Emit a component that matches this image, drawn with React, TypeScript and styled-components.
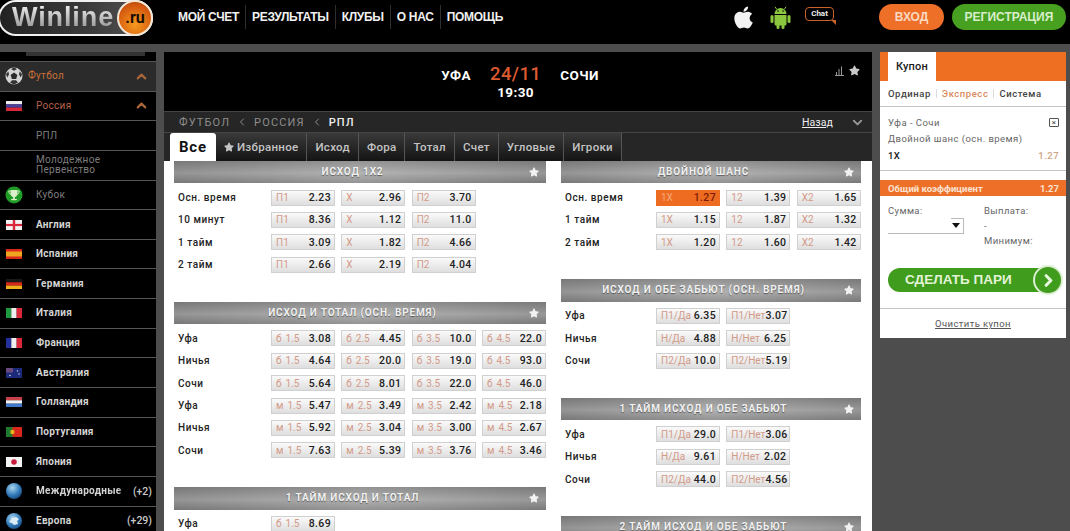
import React from "react";
import styled, { createGlobalStyle } from "styled-components";
import { FaApple, FaStar } from "react-icons/fa";
import { FiChevronDown, FiChevronLeft, FiChevronUp, FiChevronRight } from "react-icons/fi";

const GlobalStyle = createGlobalStyle`
  html, body {
    margin: 0;
    height: 100%;
    overflow: hidden;
    background: #4d4d4d;
    font-family: Roboto, "Liberation Sans", sans-serif;
  }
  * { box-sizing: border-box; }
`;

const Shell = styled.div`
  height: 531px;
  overflow: hidden;
  display: flex;
  flex-direction: column;
`;

const Top = styled.header`
  height: 44px;
  flex: none;
  background: #000;
  display: flex;
  align-items: center;
  padding-right: 4px;
`;

const Logo = styled.div`
  width: 155px;
  height: 36px;
  margin-top: -9px;
  margin-left: -2px;
  padding-left: 12px;
  border: 2px solid #f1f1f1;
  border-radius: 18px;
  background: linear-gradient(90deg, #222, #3c3c3c 60%, #555);
  display: flex;
  align-items: center;
  position: relative;
  flex: none;
`;

const LogoText = styled.span`
  font-family: "Liberation Sans", sans-serif;
  font-size: 27px;
  font-weight: 700;
  letter-spacing: 0.9px;
  line-height: 1;
  background: linear-gradient(180deg, #f2f2f2, #8d8d8d);
  -webkit-background-clip: text;
  background-clip: text;
  color: transparent;
`;

const LogoBadge = styled.span`
  position: absolute;
  right: -2px;
  top: -2px;
  width: 36px;
  height: 36px;
  border-radius: 50%;
  border: 2px solid #f3e6d4;
  background: radial-gradient(circle at 50% 70%, #f79a1e, #d3570f 70%, #8f3a0a);
  color: #1a0d02;
  font-size: 16px;
  font-weight: 700;
  display: flex;
  align-items: center;
  justify-content: center;
`;

const Nav = styled.nav`
  display: flex;
  align-items: center;
  margin-left: 25px;
  margin-top: -11px;
`;

const NavItem = styled.a`
  font-family: "Liberation Sans", sans-serif;
  font-size: 12px;
  font-weight: 700;
  letter-spacing: -0.3px;
  color: #f0f0f0;
  height: 24px;
  line-height: 24px;
  padding: 0 6px;
  white-space: nowrap;
  border-left: 1px solid #2e2e2e;

  &:first-child {
    border-left: 0;
    padding-left: 0;
  }
`;

const TopRight = styled.div`
  margin-left: auto;
  display: flex;
  align-items: center;
  margin-top: -10px;
`;

const AppIcons = styled.div`
  display: flex;
  align-items: center;
  gap: 14px;
  margin-right: 45px;
`;

const ChatBubble = styled.span`
  position: relative;
  width: 29px;
  height: 14px;
  margin-top: -6px;
  border: 1.5px solid #c9622a;
  border-radius: 4px;
  color: #eee;
  font-size: 8px;
  font-weight: 700;
  text-align: center;
  line-height: 11px;

  &::after {
    content: "";
    position: absolute;
    right: -3px;
    bottom: -5px;
    border-top: 5px solid #c9622a;
    border-left: 5px solid transparent;
  }
`;

const PillButton = styled.a<{ $green?: boolean; $width: number }>`
  width: ${(p) => p.$width}px;
  height: 26px;
  border-radius: 13px;
  margin-left: ${(p) => (p.$green ? 8 : 0)}px;
  background: ${(p) => (p.$green ? "#47a01f" : "#ee6f28")};
  color: ${(p) => (p.$green ? "#d8eecb" : "#fbd9c2")};
  font-family: "Liberation Sans", sans-serif;
  font-size: 12px;
  font-weight: 700;
  display: flex;
  align-items: center;
  justify-content: center;
`;

const Body = styled.div`
  flex: 1;
  min-height: 0;
  padding-top: 8px;
  display: flex;
  align-items: flex-start;
  gap: 8px;
`;

const Sidebar = styled.aside`
  width: 156px;
  height: 479px;
  flex: none;
  background: #000;
  overflow: hidden;
`;

const SearchStub = styled.div`
  height: 10px;
  padding-left: 26px;
  border-bottom: 1px solid #555;
`;

const SearchBar = styled.div`
  width: 119px;
  height: 4px;
  background: #333;
`;

const SideRow = styled.div<{ $active?: boolean }>`
  height: 29.65px;
  display: flex;
  align-items: center;
  padding-right: 4px;
  border-bottom: 1px solid #555;
  background: ${(p) => (p.$active ? "#2b2b2b" : "#000")};
`;

const SideIcon = styled.span`
  width: 36px;
  flex: none;
  display: flex;
  justify-content: center;
  padding-right: 8px;
`;

const SideLabel = styled.span<{
  $tone: "orange" | "rust" | "muted" | "bright";
  $tight?: boolean;
  $fade?: boolean;
}>`
  flex: 1;
  min-width: 0;
  font-size: 10px;
  line-height: 10px;
  letter-spacing: 0.3px;
  white-space: pre-line;
  margin-left: ${(p) => (p.$tight ? -8 : 0)}px;
  font-weight: ${(p) => (p.$tone === "bright" ? 700 : 400)};
  color: ${(p) =>
    ({ orange: "#c9703a", rust: "#b5624a", muted: "#7d7d7d", bright: "#d4d4d4" })[p.$tone]};
  ${(p) =>
    p.$fade &&
    `
    white-space: nowrap;
    overflow: hidden;
    -webkit-mask-image: linear-gradient(90deg, #000 84%, transparent 100%);
    mask-image: linear-gradient(90deg, #000 84%, transparent 100%);
  `}
`;

const SideCount = styled.span`
  color: #c8c8c8;
  font-size: 10.5px;
  font-weight: 500;
`;

const SideChevron = styled(FiChevronUp)`
  color: #a8653a;
  font-size: 15px;
  margin-right: 3px;
  stroke-width: 3.5;
`;

const Main = styled.main`
  width: 708px;
  height: 479px;
  flex: none;
  overflow: hidden;
  background: #fff;
`;

const Hero = styled.div`
  height: 59px;
  background: #000;
  display: grid;
  grid-template-columns: 1fr auto 1fr;
  padding-top: 12px;
`;

const Match = styled.div`
  grid-column: 2;
  display: grid;
  grid-template-columns: auto auto auto;
  column-gap: 19px;
  justify-items: center;
  align-items: center;
  align-content: start;
  color: #fff;
  font-weight: 700;
  font-size: 13.5px;
  letter-spacing: 0.4px;
  margin-left: 4px;
`;

const MatchDate = styled.span`
  color: #dd5a30;
  font-size: 18.5px;
  font-weight: 500;
  line-height: 21px;
`;

const MatchTime = styled.span`
  grid-column: 2;
  font-size: 13.5px;
  line-height: 17px;
  margin-top: -1px;
`;

const HeroTools = styled.div`
  grid-column: 3;
  display: flex;
  justify-content: flex-end;
  align-items: flex-start;
  gap: 5px;
  padding-right: 12px;
  color: #c9c9c9;
`;

const StatsGlyph = styled.svg`
  margin-top: 2px;
`;

const HeroStar = styled(FaStar)`
  margin-top: 1px;
  font-size: 11px;
`;

const Crumbs = styled.div`
  height: 22px;
  background: #262626;
  border-top: 1px solid #444;
  border-bottom: 1px solid #444;
  display: flex;
  align-items: center;
  padding: 0 7px 0 15px;
  color: #8d8d8d;
  font-size: 11px;
  letter-spacing: 1.15px;
`;

const CrumbSep = styled(FiChevronLeft)`
  margin: 0 6px 0 6px;
  font-size: 12px;
`;

const CrumbNow = styled.span`
  color: #eee;
  font-weight: 500;
`;

const BackLink = styled.a`
  margin-left: auto;
  margin-right: 17px;
  color: #eee;
  font-size: 10.5px;
  letter-spacing: 0.1px;
  text-decoration: underline;
`;

const CrumbToggle = styled(FiChevronDown)`
  color: #999;
  font-size: 15px;
  stroke-width: 3;
`;

const Tabs = styled.div`
  height: 28px;
  background: #262626;
  display: flex;
  padding-left: 6px;
`;

const Tab = styled.a<{ $on?: boolean }>`
  display: flex;
  align-items: center;
  gap: 3px;
  padding: 0 ${(p) => (p.$on ? 9 : 8)}px;
  font-size: ${(p) => (p.$on ? 15 : 11.5)}px;
  font-weight: ${(p) => (p.$on ? 700 : 500)};
  letter-spacing: ${(p) => (p.$on ? 0.8 : 0.3)}px;
  color: ${(p) => (p.$on ? "#111" : "#c4c4c4")};
  background: ${(p) => (p.$on ? "#fff" : "linear-gradient(180deg, #3a3a3a, #141414)")};
  border-right: ${(p) => (p.$on ? "0" : "1px solid #555")};
  border-radius: ${(p) => (p.$on ? "3px 3px 0 0" : "0")};
  white-space: nowrap;
`;

const Markets = styled.div`
  display: flex;
  align-items: flex-start;
  gap: 15px;
  padding-left: 10px;
`;

const Column = styled.div<{ $width: number }>`
  width: ${(p) => p.$width}px;
  flex: none;
`;

const Section = styled.section`
  margin-bottom: 25.8px;
`;

const SectionHead = styled.h3`
  position: relative;
  margin: 0 0 3px;
  height: 22.4px;
  padding-right: 15px;
  background:
    linear-gradient(90deg, rgba(70, 70, 70, 0.18), rgba(255, 255, 255, 0.14) 50%, rgba(70, 70, 70, 0.15)),
    linear-gradient(180deg, #828282, #a6a6a6 55%, #828282);
  color: #f0f0f0;
  font-size: 10px;
  font-weight: 700;
  letter-spacing: 0.85px;
  line-height: 22px;
  text-align: center;
  text-shadow: 0 1px 1px rgba(0, 0, 0, 0.45);
`;

const HeadStar = styled(FaStar)`
  position: absolute;
  right: 7px;
  top: 6px;
  font-size: 10px;
  color: #f2f2f2;
`;

const Row = styled.div`
  height: 22.4px;
  display: flex;
  align-items: center;
`;

const RowLabel = styled.span<{ $width: number }>`
  width: ${(p) => p.$width}px;
  flex: none;
  padding-left: 4px;
  color: #222;
  font-size: 10px;
  font-weight: 500;
  letter-spacing: 0.55px;
`;

const Odds = styled.div`
  display: flex;
  gap: 6.33px;
`;

const Odd = styled.div<{ $on?: boolean }>`
  width: 64px;
  height: 16px;
  flex: none;
  padding: 0 2px;
  display: flex;
  align-items: center;
  justify-content: space-between;
  border: 1px solid ${(p) => (p.$on ? "#ee6c22" : "#d0d0d0")};
  background: ${(p) => (p.$on ? "#ee6c22" : "linear-gradient(180deg, #fafafa, #dedede)")};
  font-size: 10.5px;
  white-space: nowrap;
`;

const OddName = styled.span<{ $on?: boolean }>`
  padding-left: 2px;
  font-size: 10px;
  word-spacing: 1.5px;
  color: ${(p) => (p.$on ? "#f5a778" : "#d39a88")};
`;

const OddValue = styled.span<{ $on?: boolean }>`
  font-weight: 500;
  letter-spacing: 0.35px;
  padding-right: 1px;
  color: ${(p) => (p.$on ? "#7c1c05" : "#222")};
`;

const Coupon = styled.aside`
  width: 186px;
  flex: none;
  background: #fff;
`;

const CouponTop = styled.div`
  height: 29px;
  background: #ee6f22;
  padding-left: 8px;
`;

const CouponTab = styled.div`
  width: 48px;
  height: 29px;
  background: #fff;
  color: #1c1c1c;
  font-size: 11px;
  font-weight: 500;
  line-height: 29px;
  text-align: center;
  letter-spacing: 0.2px;
`;

const CouponModes = styled.div`
  height: 26px;
  padding-left: 8px;
  display: flex;
  align-items: center;
  border-bottom: 1px solid #c4c4c4;
  font-size: 9.5px;
  font-weight: 500;
  letter-spacing: 0.55px;
  color: #444;
`;

const CouponMode = styled.span<{ $on?: boolean }>`
  color: ${(p) => (p.$on ? "#d88a5c" : "#444")};
  padding-right: 5px;
  margin-right: 5px;
  border-right: 1px solid #ddd;
  line-height: 9px;

  &:last-child {
    border-right: 0;
  }
`;

const Slip = styled.div`
  height: 64px;
  padding: 7px 7px 0 8px;
  border-bottom: 1px solid #c4c4c4;
  font-size: 9.5px;
  letter-spacing: 0.45px;
  color: #666;
`;

const SlipLine = styled.div`
  height: 16.5px;
  display: flex;
  align-items: center;
  justify-content: space-between;
  white-space: nowrap;
`;

const SlipClose = styled.span`
  width: 10px;
  height: 9px;
  border: 1px solid #555;
  border-radius: 1px;
  color: #444;
  font-size: 8px;
  line-height: 7px;
  text-align: center;
`;

const SlipPick = styled.span`
  color: #222;
  font-weight: 500;
`;

const SlipOdd = styled.span`
  color: #c9a488;
  font-weight: 500;
`;

const TotalBar = styled.div`
  height: 16px;
  margin-top: 9px;
  padding: 0 7px 0 8px;
  background: #ee6f28;
  color: #fbe3d2;
  font-size: 9.5px;
  font-weight: 700;
  display: flex;
  align-items: center;
  justify-content: space-between;
`;

const Stake = styled.div`
  display: grid;
  grid-template-columns: 96px 1fr;
  padding: 9px 0 0 8px;
  height: 72px;
  font-size: 9.5px;
  letter-spacing: 0.4px;
  color: #666;
`;

const StakeCol = styled.div`
  display: flex;
  flex-direction: column;
`;

const StakeLine = styled.span`
  height: 15px;
  line-height: 12px;
`;

const StakeField = styled.div`
  width: 76px;
  height: 16px;
  margin-top: -2px;
  border-bottom: 1px solid #bbb;
  border-right: 1px solid #bbb;
  background: linear-gradient(#bbb, #bbb) right top / 12px 1px no-repeat;
  display: flex;
  justify-content: flex-end;
  align-items: center;
  padding-right: 3px;

  &::after {
    content: "";
    border-top: 5px solid #111;
    border-left: 4px solid transparent;
    border-right: 4px solid transparent;
  }
`;

const BetButton = styled.a`
  position: relative;
  display: block;
  margin: 0 6px 0 8px;
  height: 24px;
  border-radius: 12px;
  background: #3f9c1c;
  color: #e3f3d8;
  font-family: "Liberation Sans", sans-serif;
  font-size: 13.5px;
  font-weight: 700;
  line-height: 24px;
  padding-left: 17px;
`;

const BetArrow = styled.span`
  position: absolute;
  right: -1px;
  top: -1px;
  width: 26px;
  height: 26px;
  border-radius: 50%;
  background: #3f9c1c;
  box-shadow: 0 0 0 2px #dcefd2;
  color: #e7f5dd;
  display: flex;
  align-items: center;
  justify-content: center;
  font-size: 19px;

  svg {
    stroke-width: 4;
  }
`;

const CouponFoot = styled.div`
  height: 30px;
  margin-top: 16px;
  border-top: 1px solid #c4c4c4;
  text-align: center;
  font-size: 9.5px;
  line-height: 29px;
  letter-spacing: 0.4px;
  color: #555;
  text-decoration: underline;
`;

const flags: Record<string, React.ReactNode> = {
  ru: (
    <>
      <rect width="16" height="3.4" fill="#eee" />
      <rect y="3.3" width="16" height="3.4" fill="#4a3f9c" />
      <rect y="6.6" width="16" height="3.4" fill="#d8283a" />
    </>
  ),
  en: (
    <>
      <rect width="16" height="10" fill="#f2f2f2" />
      <rect x="6.8" width="2.4" height="10" fill="#d8283a" />
      <rect y="3.9" width="16" height="2.2" fill="#d8283a" />
    </>
  ),
  es: (
    <>
      <rect width="16" height="10" fill="#d8281c" />
      <rect y="2.5" width="16" height="5" fill="#f0a51e" />
    </>
  ),
  de: (
    <>
      <rect width="16" height="3.4" fill="#1a1a1a" />
      <rect y="3.3" width="16" height="3.4" fill="#d8281c" />
      <rect y="6.6" width="16" height="3.4" fill="#f0b01e" />
    </>
  ),
  it: (
    <>
      <rect width="5.4" height="10" fill="#1f9a3f" />
      <rect x="5.3" width="5.4" height="10" fill="#eee" />
      <rect x="10.6" width="5.4" height="10" fill="#d8283a" />
    </>
  ),
  fr: (
    <>
      <rect width="5.4" height="10" fill="#24309c" />
      <rect x="5.3" width="5.4" height="10" fill="#eee" />
      <rect x="10.6" width="5.4" height="10" fill="#d8283a" />
    </>
  ),
  au: (
    <>
      <rect width="16" height="10" fill="#1c2a7c" />
      <rect width="7" height="4.5" fill="#6a4a7c" />
      <circle cx="11.5" cy="3" r="0.7" fill="#ddd" />
      <circle cx="13" cy="6" r="0.7" fill="#ddd" />
      <circle cx="4" cy="7.5" r="0.8" fill="#ddd" />
    </>
  ),
  nl: (
    <>
      <rect width="16" height="3.4" fill="#c8404a" />
      <rect y="3.3" width="16" height="3.4" fill="#f2f2f2" />
      <rect y="6.6" width="16" height="3.4" fill="#3f78c8" />
    </>
  ),
  pt: (
    <>
      <rect width="16" height="10" fill="#d8281c" />
      <rect width="6.4" height="10" fill="#1f7a2f" />
      <circle cx="6.4" cy="5" r="2.2" fill="#e8b01e" />
    </>
  ),
  jp: (
    <>
      <rect width="16" height="10" fill="#f4f4f4" />
      <circle cx="8" cy="5" r="2.8" fill="#c81c3a" />
    </>
  ),
};

const Flag = ({ code }: { code: string }) => (
  <svg width="16" height="10" viewBox="0 0 16 10">
    {flags[code]}
  </svg>
);

const AndroidIcon = () => (
  <svg width="21" height="23" viewBox="0 0 21 23" fill="#8cc63f">
    <path d="M4.500 8a6 6 0 0 1 12 0z" />
    <path d="M6.500 3 5 .8M14.500 3 16 .8" stroke="#8cc63f" fill="none" />
    <path d="M4.500 9h12v9a1.500 1.500 0 0 1-1.500 1.500H6A1.500 1.500 0 0 1 4.500 18z" />
    <rect x="0.500" y="9" width="3" height="8" rx="1.500" />
    <rect x="17.500" y="9" width="3" height="8" rx="1.500" />
    <rect x="6.500" y="17" width="3" height="6" rx="1.500" />
    <rect x="11.500" y="17" width="3" height="6" rx="1.500" />
    <circle cx="8" cy="5" r="0.8" fill="#000" />
    <circle cx="13" cy="5" r="0.8" fill="#000" />
  </svg>
);

const BallIcon = () => (
  <svg width="18" height="18" viewBox="0 0 18 18">
    <circle cx="9" cy="9" r="8.500" fill="#d4d4d4" />
    <path d="M9 5.500l3.400 2.400-1.300 4H6.900l-1.300-4z" fill="#2a2a2a" />
    <path d="M9 .5l3 1.600-3 1.600-3-1.600zM1 7l2.400-2.600.6 3.200-1.800 3zM17 7l-2.400-2.600-.6 3.200 1.800 3zM5 15.500l2-2.200h4l2 2.200-4 2z" fill="#333" />
  </svg>
);

const CupIcon = () => (
  <svg width="18" height="18" viewBox="0 0 18 18">
    <circle cx="9" cy="9" r="8.500" fill="#1f9a25" />
    <path d="M5.500 4h7v3.500c0 2-1.400 3.300-2.600 3.600V13h2v1.300H6.100V13h2v-1.900C6.900 10.800 5.500 9.500 5.500 7.500z" fill="#d9f0c8" />
    <path d="M5.500 5H3.800c0 2 .7 3 2.100 3.400M12.500 5h1.700c0 2-.7 3-2.100 3.400" fill="none" stroke="#d9f0c8" />
  </svg>
);

const GlobeIcon = ({ land }: { land: boolean }) => (
  <svg width="16" height="16" viewBox="0 0 16 16">
    <defs>
      <radialGradient id="globe" cx="0.4" cy="0.3" r="0.8">
        <stop offset="0" stopColor="#a8d4ee" />
        <stop offset="0.6" stopColor="#2f78b8" />
        <stop offset="1" stopColor="#123c6c" />
      </radialGradient>
    </defs>
    <circle cx="8" cy="8" r="8" fill="url(#globe)" />
    {land && <path d="M3 9l3-4 4-1 3 2-2 2 1 3-4 1-2-2z" fill="#dcecf6" />}
  </svg>
);

const StatsIcon = () => (
  <StatsGlyph width="9" height="10" viewBox="0 0 9 10">
    <path d="M0 9.500h9M1.500 9V6M4 9V3M6.500 9V.5" stroke="#9a9a9a" fill="none" />
  </StatsGlyph>
);

const countries = [
  ["en", "Англия"],
  ["es", "Испания"],
  ["de", "Германия"],
  ["it", "Италия"],
  ["fr", "Франция"],
  ["au", "Австралия"],
  ["nl", "Голландия"],
  ["pt", "Португалия"],
  ["jp", "Япония"],
];

const pick = (names: string[], values: string[]) =>
  values.map((v, i) => ({ name: names[i], value: v }));

type Line = { label: string; odds: { name: string; value: string }[] };
type Market = { title: string; lines: Line[] };

const x12 = ["П1", "Х", "П2"];
const dbl = ["1Х", "12", "Х2"];
const over = ["б 1.5", "б 2.5", "б 3.5", "б 4.5"];
const under = ["м 1.5", "м 2.5", "м 3.5", "м 4.5"];
const p1 = ["П1/Да", "П1/Нет"];
const nn = ["Н/Да", "Н/Нет"];
const p2 = ["П2/Да", "П2/Нет"];

const leftMarkets: Market[] = [
  {
    title: "ИСХОД 1Х2",
    lines: [
      { label: "Осн. время", odds: pick(x12, ["2.23", "2.96", "3.70"]) },
      { label: "10 минут", odds: pick(x12, ["8.36", "1.12", "11.0"]) },
      { label: "1 тайм", odds: pick(x12, ["3.09", "1.82", "4.66"]) },
      { label: "2 тайм", odds: pick(x12, ["2.66", "2.19", "4.04"]) },
    ],
  },
  {
    title: "ИСХОД И ТОТАЛ (ОСН. ВРЕМЯ)",
    lines: [
      { label: "Уфа", odds: pick(over, ["3.08", "4.45", "10.0", "22.0"]) },
      { label: "Ничья", odds: pick(over, ["4.64", "20.0", "19.0", "93.0"]) },
      { label: "Сочи", odds: pick(over, ["5.64", "8.01", "22.0", "46.0"]) },
      { label: "Уфа", odds: pick(under, ["5.47", "3.49", "2.42", "2.18"]) },
      { label: "Ничья", odds: pick(under, ["5.92", "3.04", "3.00", "2.67"]) },
      { label: "Сочи", odds: pick(under, ["7.63", "5.39", "3.76", "3.46"]) },
    ],
  },
  {
    title: "1 ТАЙМ ИСХОД И ТОТАЛ",
    lines: [{ label: "Уфа", odds: pick(over, ["8.69"]) }],
  },
];

const rightMarkets: Market[] = [
  {
    title: "ДВОЙНОЙ ШАНС",
    lines: [
      { label: "Осн. время", odds: pick(dbl, ["1.27", "1.39", "1.65"]) },
      { label: "1 тайм", odds: pick(dbl, ["1.15", "1.87", "1.32"]) },
      { label: "2 тайм", odds: pick(dbl, ["1.20", "1.60", "1.42"]) },
    ],
  },
  {
    title: "ИСХОД И ОБЕ ЗАБЬЮТ (ОСН. ВРЕМЯ)",
    lines: [
      { label: "Уфа", odds: pick(p1, ["6.35", "3.07"]) },
      { label: "Ничья", odds: pick(nn, ["4.88", "6.25"]) },
      { label: "Сочи", odds: pick(p2, ["10.0", "5.19"]) },
    ],
  },
  {
    title: "1 ТАЙМ ИСХОД И ОБЕ ЗАБЬЮТ",
    lines: [
      { label: "Уфа", odds: pick(p1, ["29.0", "3.06"]) },
      { label: "Ничья", odds: pick(nn, ["9.61", "2.02"]) },
      { label: "Сочи", odds: pick(p2, ["44.0", "4.56"]) },
    ],
  },
  { title: "2 ТАЙМ ИСХОД И ОБЕ ЗАБЬЮТ", lines: [] },
];

const MarketList = ({ markets, labelWidth }: { markets: Market[]; labelWidth: number }) => (
  <>
    {markets.map((m) => (
      <Section key={m.title}>
        <SectionHead>
          {m.title}
          <HeadStar />
        </SectionHead>
        {m.lines.map((line, i) => (
          <Row key={i}>
            <RowLabel $width={labelWidth}>{line.label}</RowLabel>
            <Odds>
              {line.odds.map((o) => {
                const on = o.name === "1Х" && o.value === "1.27";
                return (
                  <Odd key={o.name} $on={on}>
                    <OddName $on={on}>{o.name}</OddName>
                    <OddValue $on={on}>{o.value}</OddValue>
                  </Odd>
                );
              })}
            </Odds>
          </Row>
        ))}
      </Section>
    ))}
  </>
);

export default function App() {
  return (
    <Shell>
      <GlobalStyle />
      <Top>
        <Logo>
          <LogoText>Winline</LogoText>
          <LogoBadge>.ru</LogoBadge>
        </Logo>
        <Nav>
          {["МОЙ СЧЕТ", "РЕЗУЛЬТАТЫ", "КЛУБЫ", "О НАС", "ПОМОЩЬ"].map((n) => (
            <NavItem key={n}>{n}</NavItem>
          ))}
        </Nav>
        <TopRight>
          <AppIcons>
            <FaApple size={25} color="#f2f2f2" />
            <AndroidIcon />
            <ChatBubble>Chat</ChatBubble>
          </AppIcons>
          <PillButton $width={65}>ВХОД</PillButton>
          <PillButton $green $width={114}>РЕГИСТРАЦИЯ</PillButton>
        </TopRight>
      </Top>
      <Body>
        <Sidebar>
          <SearchStub>
            <SearchBar />
          </SearchStub>
          <SideRow $active>
            <SideIcon><BallIcon /></SideIcon>
            <SideLabel $tone="orange" $tight>Футбол</SideLabel>
            <SideChevron />
          </SideRow>
          <SideRow>
            <SideIcon><Flag code="ru" /></SideIcon>
            <SideLabel $tone="rust">Россия</SideLabel>
            <SideChevron />
          </SideRow>
          <SideRow>
            <SideIcon />
            <SideLabel $tone="muted">РПЛ</SideLabel>
          </SideRow>
          <SideRow>
            <SideIcon />
            <SideLabel $tone="muted">{"Молодежное\nПервенство"}</SideLabel>
          </SideRow>
          <SideRow>
            <SideIcon><CupIcon /></SideIcon>
            <SideLabel $tone="muted">Кубок</SideLabel>
          </SideRow>
          {countries.map(([code, name]) => (
            <SideRow key={code}>
              <SideIcon><Flag code={code} /></SideIcon>
              <SideLabel $tone="bright">{name}</SideLabel>
            </SideRow>
          ))}
          <SideRow>
            <SideIcon><GlobeIcon land={false} /></SideIcon>
            <SideLabel $tone="bright" $fade>Международные</SideLabel>
            <SideCount>(+2)</SideCount>
          </SideRow>
          <SideRow>
            <SideIcon><GlobeIcon land /></SideIcon>
            <SideLabel $tone="bright">Европа</SideLabel>
            <SideCount>(+29)</SideCount>
          </SideRow>
        </Sidebar>
        <Main>
          <Hero>
            <Match>
              <span>УФА</span>
              <MatchDate>24/11</MatchDate>
              <span>СОЧИ</span>
              <MatchTime>19:30</MatchTime>
            </Match>
            <HeroTools>
              <StatsIcon />
              <HeroStar />
            </HeroTools>
          </Hero>
          <Crumbs>
            <span>ФУТБОЛ</span>
            <CrumbSep />
            <span>РОССИЯ</span>
            <CrumbSep />
            <CrumbNow>РПЛ</CrumbNow>
            <BackLink>Назад</BackLink>
            <CrumbToggle />
          </Crumbs>
          <Tabs>
            <Tab $on>Все</Tab>
            <Tab><FaStar size={10} />Избранное</Tab>
            <Tab>Исход</Tab>
            <Tab>Фора</Tab>
            <Tab>Тотал</Tab>
            <Tab>Счет</Tab>
            <Tab>Угловые</Tab>
            <Tab>Игроки</Tab>
          </Tabs>
          <Markets>
            <Column $width={372}>
              <MarketList markets={leftMarkets} labelWidth={97} />
            </Column>
            <Column $width={300}>
              <MarketList markets={rightMarkets} labelWidth={95} />
            </Column>
          </Markets>
        </Main>
        <Coupon>
          <CouponTop>
            <CouponTab>Купон</CouponTab>
          </CouponTop>
          <CouponModes>
            <CouponMode>Ординар</CouponMode>
            <CouponMode $on>Экспресс</CouponMode>
            <CouponMode>Система</CouponMode>
          </CouponModes>
          <Slip>
            <SlipLine>
              <span>Уфа - Сочи</span>
              <SlipClose>×</SlipClose>
            </SlipLine>
            <SlipLine>Двойной шанс (осн. время)</SlipLine>
            <SlipLine>
              <SlipPick>1Х</SlipPick>
              <SlipOdd>1.27</SlipOdd>
            </SlipLine>
          </Slip>
          <TotalBar>
            <span>Общий коэффициент</span>
            <span>1.27</span>
          </TotalBar>
          <Stake>
            <StakeCol>
              <StakeLine>Сумма:</StakeLine>
              <StakeField />
            </StakeCol>
            <StakeCol>
              <StakeLine>Выплата:</StakeLine>
              <StakeLine>-</StakeLine>
              <StakeLine>Минимум:</StakeLine>
            </StakeCol>
          </Stake>
          <BetButton>
            СДЕЛАТЬ ПАРИ
            <BetArrow><FiChevronRight /></BetArrow>
          </BetButton>
          <CouponFoot>Очистить купон</CouponFoot>
        </Coupon>
      </Body>
    </Shell>
  );
}
